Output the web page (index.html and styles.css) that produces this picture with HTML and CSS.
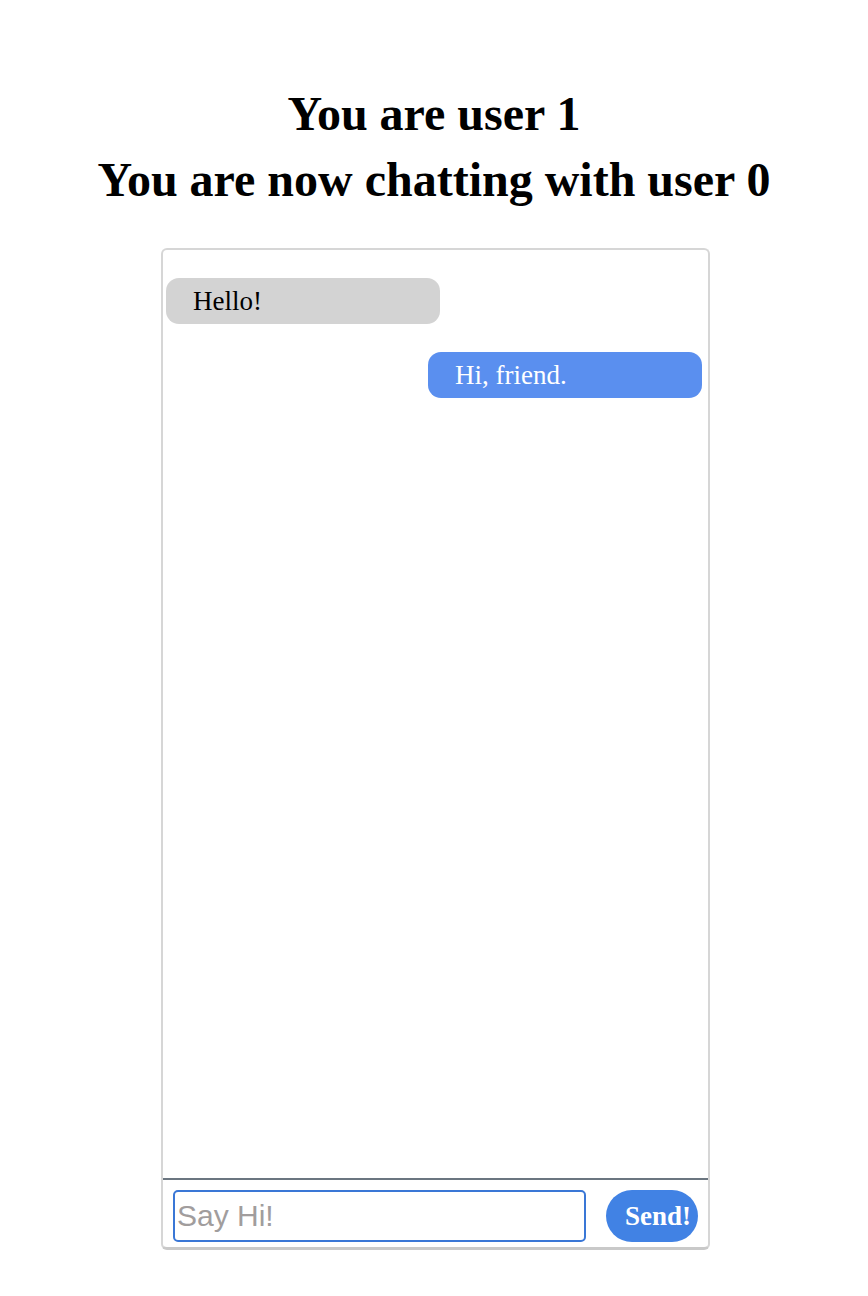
FILE: index.html
```html
<!DOCTYPE html>
<html lang="en">
<head>
<meta charset="utf-8">
<title>Chat</title>
<link rel="stylesheet" href="styles.css">
</head>
<body>
<header class="titles">
  <h1 class="title">You are user 1</h1>
  <h1 class="title">You are now chatting with user 0</h1>
</header>
<main class="chat">
  <section class="messages">
    <div class="bubble bubble-them">Hello!</div>
    <div class="bubble bubble-me">Hi, friend.</div>
  </section>
  <form class="composer" onsubmit="return false">
    <input class="composer-input" type="text" placeholder="Say Hi!" autofocus>
    <button class="composer-send" type="submit">Send!</button>
  </form>
</main>
</body>
</html>
```
FILE: styles.css
```css
html, body {
  margin: 0;
  padding: 0;
  background: #ffffff;
}

body {
  font-family: "Liberation Serif", "Times New Roman", serif;
  color: #000;
}

.titles {
  padding-top: 81px;
  text-align: center;
}

.title {
  margin: 0;
  font-size: 48px;
  line-height: 66px;
  font-weight: bold;
}

.chat {
  box-sizing: border-box;
  width: 549px;
  height: 1002px;
  margin: 35px 0 0 calc(50% - 273px);
  border: 2px solid #d6d6d6;
  border-bottom-width: 3px;
  border-bottom-color: #c9c9c9;
  border-radius: 6px;
  display: flex;
  flex-direction: column;
}

.messages {
  flex: 1;
  padding: 28px 6px 0 3px;
  display: flex;
  flex-direction: column;
  gap: 28px;
}

.bubble {
  box-sizing: border-box;
  width: 274px;
  height: 46px;
  line-height: 46px;
  padding-left: 27px;
  font-size: 27px;
  border-radius: 13px;
}

.bubble-them {
  align-self: flex-start;
  background: #d3d3d3;
  color: #000;
}

.bubble-me {
  align-self: flex-end;
  background: #5a8fef;
  color: #fff;
}

.composer {
  margin: 0;
  border-top: 2px solid #6b7680;
  padding: 10px 10px 5px 10px;
  display: flex;
  align-items: center;
  gap: 20px;
}

.composer-input {
  box-sizing: border-box;
  flex: 1;
  height: 52px;
  margin: 0;
  border: 2px solid #3a77d6;
  border-radius: 5px;
  padding: 0 0 0 2px;
  font-family: "Liberation Sans", Arial, sans-serif;
  font-size: 30px;
  color: #000;
  caret-color: #000;
  outline: none;
}

.composer-input::placeholder {
  color: #a19d9d;
}

.composer-send {
  box-sizing: border-box;
  width: 92px;
  height: 52px;
  margin: 0;
  border: none;
  border-radius: 26px;
  background: #4182e4;
  color: #fff;
  font-family: "Liberation Serif", "Times New Roman", serif;
  font-size: 27px;
  font-weight: bold;
  text-align: left;
  padding: 0 0 0 19px;
  white-space: nowrap;
  cursor: pointer;
}
```
